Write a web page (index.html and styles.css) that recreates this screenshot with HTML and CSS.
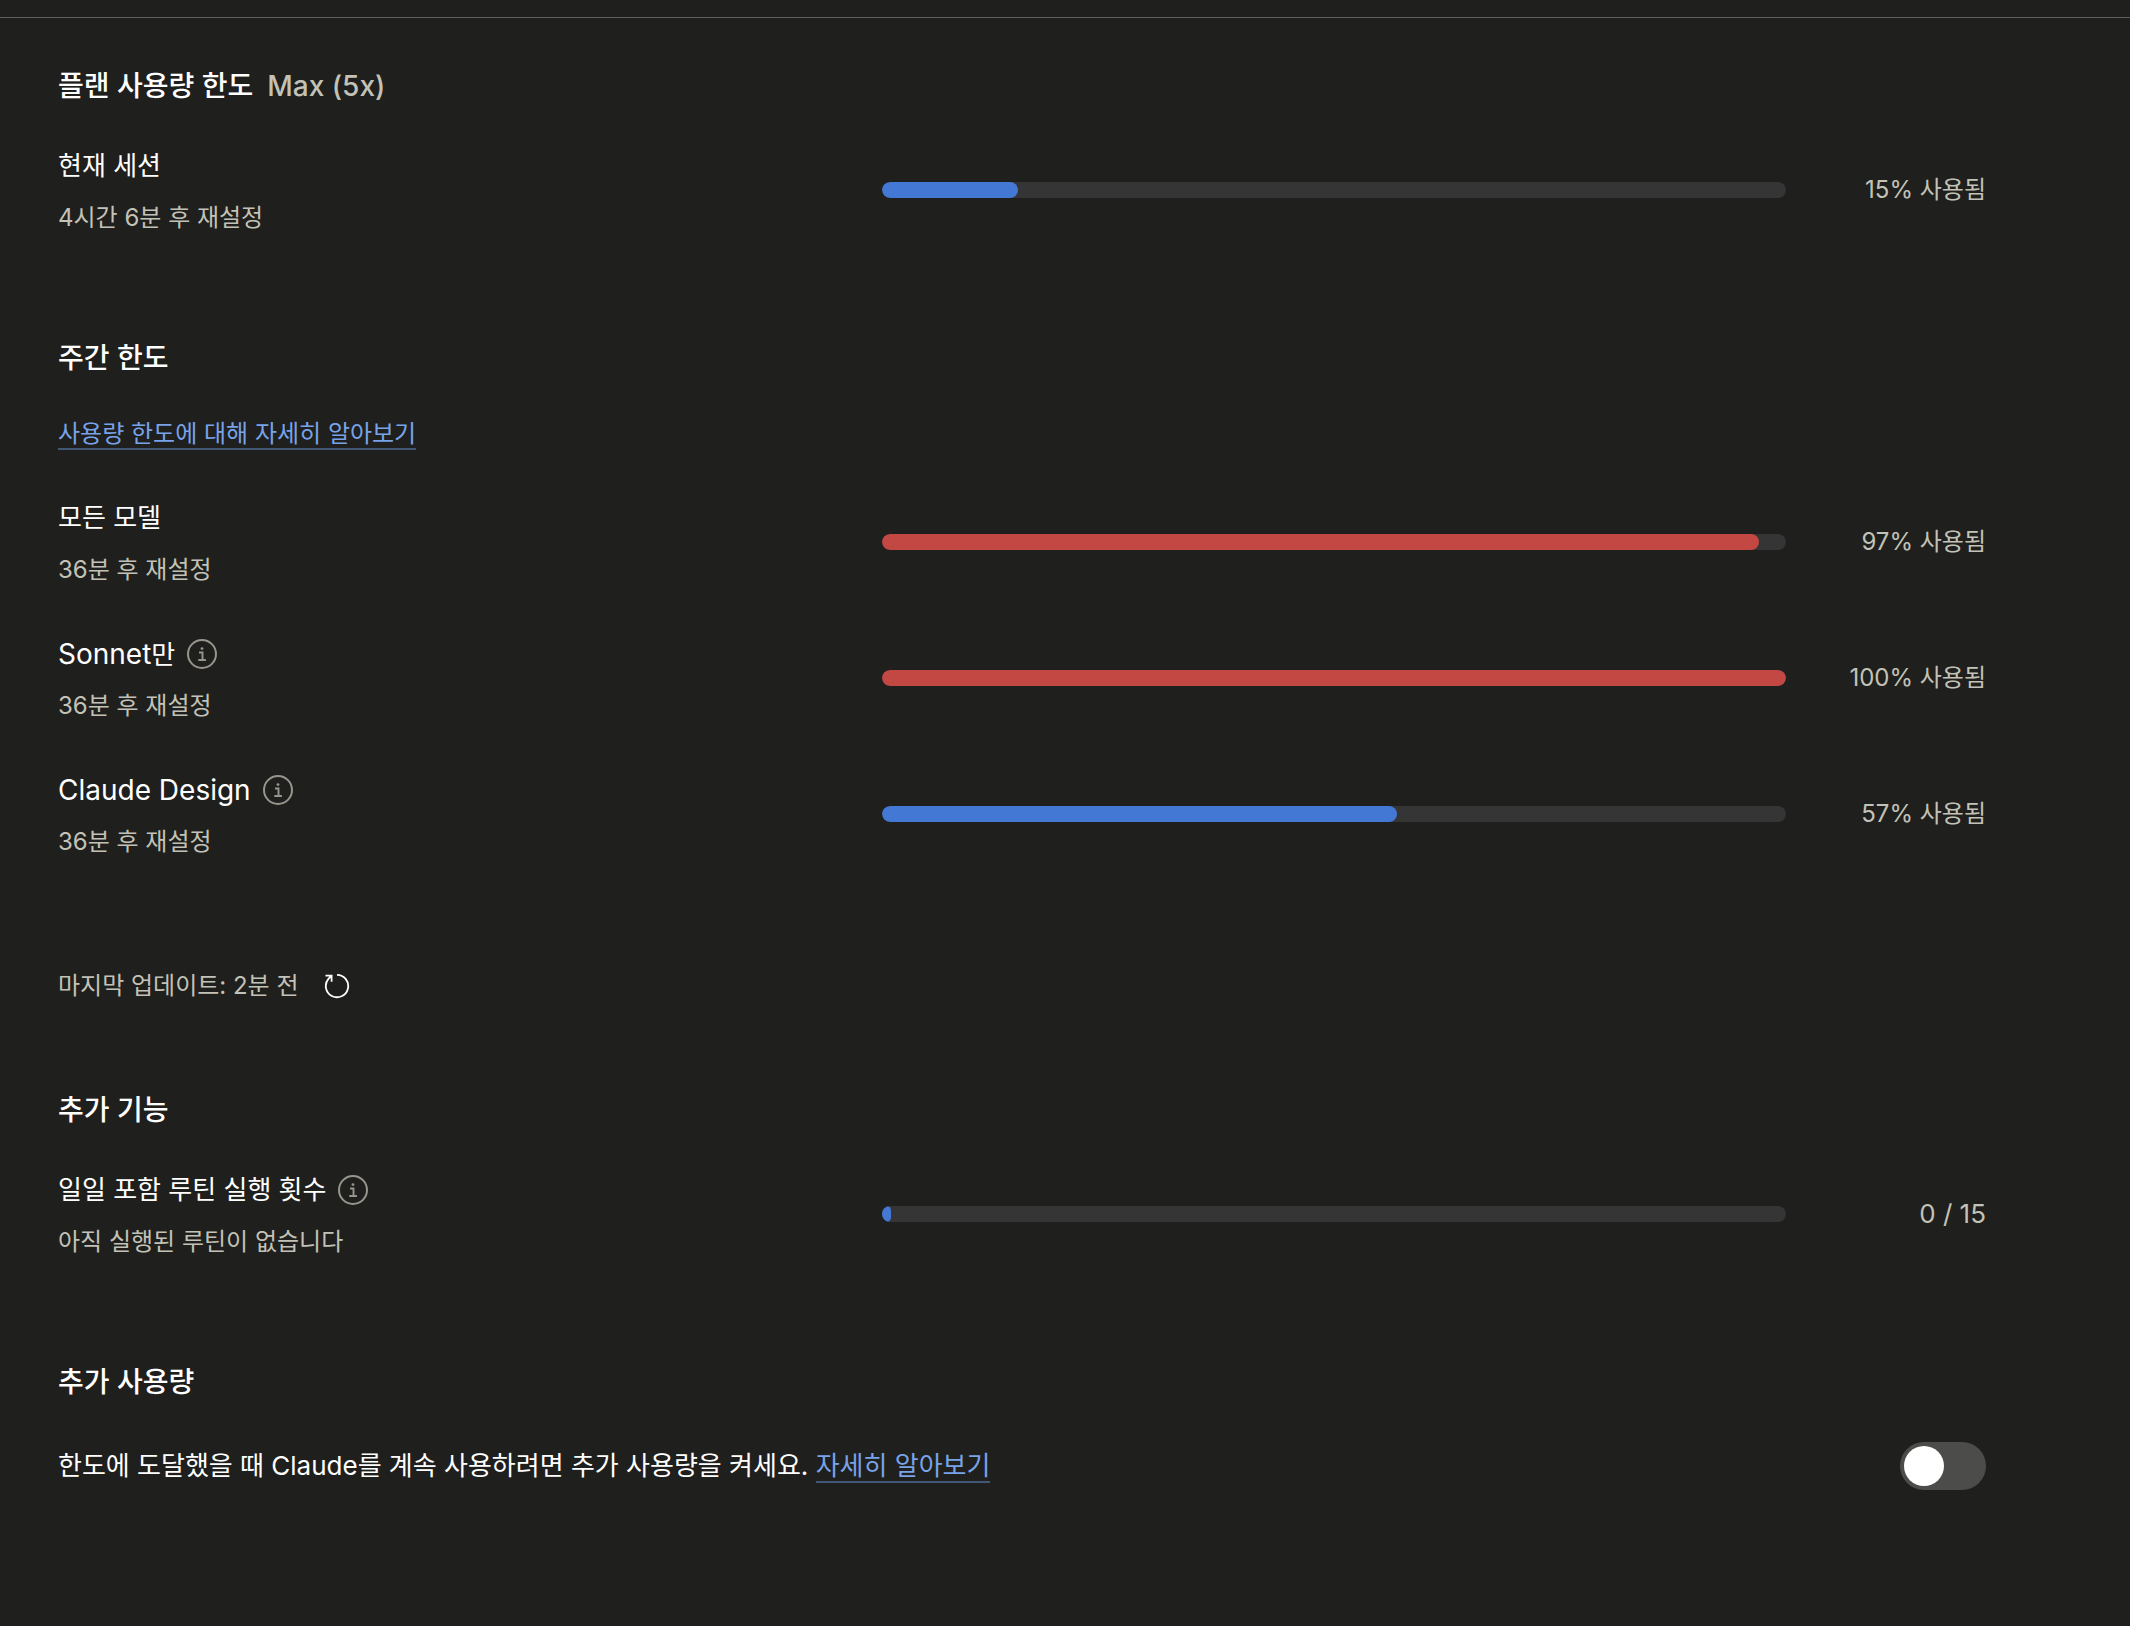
FILE: index.html
```
<!DOCTYPE html>
<html lang="ko">
<head>
  <meta charset="UTF-8">
  <meta name="viewport" content="width=device-width, initial-scale=1.0">
  <title>사용량</title>
  <link rel="stylesheet" href="styles.css">
</head>
<body>
  <svg class="sprite" aria-hidden="true">
    <symbol id="icon-info" viewBox="0 0 30 30">
      <circle cx="15" cy="15" r="14" fill="none" stroke="currentColor" stroke-width="2"/>
      <path d="M12 13.5h3.5v7M11.3 21h7.6" fill="none" stroke="currentColor" stroke-width="1.9"/>
      <circle cx="15" cy="9.6" r="1.4" fill="currentColor"/>
    </symbol>
  </svg>

  <main>
    <section>
      <h2>플랜 사용량 한도 <span class="plan">Max (5x)</span></h2>
      <div class="row">
        <div class="info">
          <h3 id="session">현재 세션</h3>
          <p>4시간 6분 후 재설정</p>
        </div>
        <div class="bar" role="progressbar" aria-labelledby="session" aria-valuenow="15"><div class="fill" style="width: 15%"></div></div>
        <p class="value">15% 사용됨</p>
      </div>
    </section>

    <section class="weekly">
      <h2>주간 한도</h2>
      <p class="more"><a href="#">사용량 한도에 대해 자세히 알아보기</a></p>
      <div class="rows">
        <div class="row">
          <div class="info">
            <h3 id="all-models">모든 모델</h3>
            <p>36분 후 재설정</p>
          </div>
          <div class="bar" role="progressbar" aria-labelledby="all-models" aria-valuenow="97"><div class="fill danger" style="width: 97%"></div></div>
          <p class="value">97% 사용됨</p>
        </div>
        <div class="row">
          <div class="info">
            <h3 id="sonnet"><span><span class="model">Sonnet</span>만</span> <button class="info-btn" type="button" aria-label="정보"><svg><use href="#icon-info"/></svg></button></h3>
            <p>36분 후 재설정</p>
          </div>
          <div class="bar" role="progressbar" aria-labelledby="sonnet" aria-valuenow="100"><div class="fill danger" style="width: 100%"></div></div>
          <p class="value">100% 사용됨</p>
        </div>
        <div class="row">
          <div class="info">
            <h3 id="design"><span class="model">Claude Design</span> <button class="info-btn" type="button" aria-label="정보"><svg><use href="#icon-info"/></svg></button></h3>
            <p>36분 후 재설정</p>
          </div>
          <div class="bar" role="progressbar" aria-labelledby="design" aria-valuenow="57"><div class="fill" style="width: 57%"></div></div>
          <p class="value">57% 사용됨</p>
        </div>
      </div>
      <div class="updated">
        <p>마지막 업데이트: 2분 전</p>
        <button class="refresh" type="button" aria-label="새로고침">
          <svg viewBox="0 0 26 26" fill="none" stroke="currentColor" stroke-width="1.8">
            <path d="M13 1.8A11.2 11.2 0 1 1 4.6 5.6L7.4 2.8M1.5 2.6H7.6V8.8"/>
          </svg>
        </button>
      </div>
    </section>

    <section>
      <h2>추가 기능</h2>
      <div class="row">
        <div class="info">
          <h3 id="routines">일일 포함 루틴 실행 횟수 <button class="info-btn" type="button" aria-label="정보"><svg><use href="#icon-info"/></svg></button></h3>
          <p>아직 실행된 루틴이 없습니다</p>
        </div>
        <div class="bar" role="progressbar" aria-labelledby="routines" aria-valuenow="0"><div class="fill" style="width: 1%"></div></div>
        <p class="value count">0 / 15</p>
      </div>
    </section>

    <section>
      <h2>추가 사용량</h2>
      <div class="extra">
        <label for="extra-usage">한도에 도달했을 때 Claude를 계속 사용하려면 추가 사용량을 켜세요. <a href="#">자세히 알아보기</a></label>
        <input class="switch" type="checkbox" role="switch" id="extra-usage">
      </div>
    </section>
  </main>
</body>
</html>
```
FILE: styles.css
```
* {
  box-sizing: border-box;
}
body {
  margin: 0;
  padding-top: 17px;
  min-height: 100vh;
  background: #1f1f1d;
  color: #fff;
  font-family: Inter, "Noto Sans CJK KR", sans-serif;
  font-size: 24px;
  line-height: 36px;
}
h2, h3, p {
  margin: 0;
}
.sprite {
  display: none;
}
main {
  display: flex;
  flex-direction: column;
  gap: 102px;
  padding: 48px 144px 102px 58px;
  border-top: 1px solid #605f5b;
}
.weekly {
  margin-bottom: -22px;
}
h2 {
  display: flex;
  gap: 14px;
  margin-bottom: 38px;
  font-size: 28px;
  line-height: 40px;
  font-weight: 500;
}
.plan {
  color: #c3c2b7;
}
h3 {
  display: flex;
  align-items: center;
  gap: 12px;
  font-size: 26px;
  line-height: 36px;
  font-weight: 400;
}
.model {
  font-size: 28px;
}
a {
  color: #78a3e8;
  text-decoration: none;
  border-bottom: 2px solid #425676;
}
.more {
  margin-bottom: 44px;
}
.rows {
  display: flex;
  flex-direction: column;
  gap: 44px;
}
.row {
  display: grid;
  grid-template-columns: 776px minmax(0, 1fr) 152px;
  align-items: center;
  gap: 48px;
}
.info {
  display: flex;
  flex-direction: column;
  gap: 16px;
  padding-top: 4px;
}
.info h3 {
  height: 36px;
}
.info p, .value, .updated p {
  color: #c3c2b7;
}
.bar {
  height: 16px;
  border-radius: 8px;
  background: #353535;
  overflow: hidden;
}
.fill {
  height: 100%;
  border-radius: 8px;
  background: #4478d5;
}
.fill.danger {
  background: #c34843;
}
.value {
  text-align: right;
  white-space: nowrap;
}
.count {
  font-size: 26px;
}
button {
  display: flex;
  align-items: center;
  justify-content: center;
  padding: 0;
  border: none;
  background: none;
  color: #fff;
  cursor: pointer;
}
.info-btn {
  color: #97958c;
}
.info-btn svg {
  width: 30px;
  height: 30px;
}
.updated {
  display: flex;
  align-items: center;
  gap: 14px;
  margin-top: 102px;
}
.refresh {
  width: 48px;
  height: 48px;
}
.refresh svg {
  width: 26px;
  height: 26px;
}
.extra {
  display: flex;
  align-items: center;
  justify-content: space-between;
  min-height: 52px;
  font-size: 26px;
}
.switch {
  appearance: none;
  display: flex;
  width: 86px;
  height: 48px;
  margin: 0;
  padding: 4px;
  border-radius: 24px;
  background: #4c4c4a;
  cursor: pointer;
}
.switch::before {
  content: "";
  width: 40px;
  height: 40px;
  border-radius: 50%;
  background: #fff;
}
.switch:checked {
  justify-content: flex-end;
  background: #4478d5;
}
```
